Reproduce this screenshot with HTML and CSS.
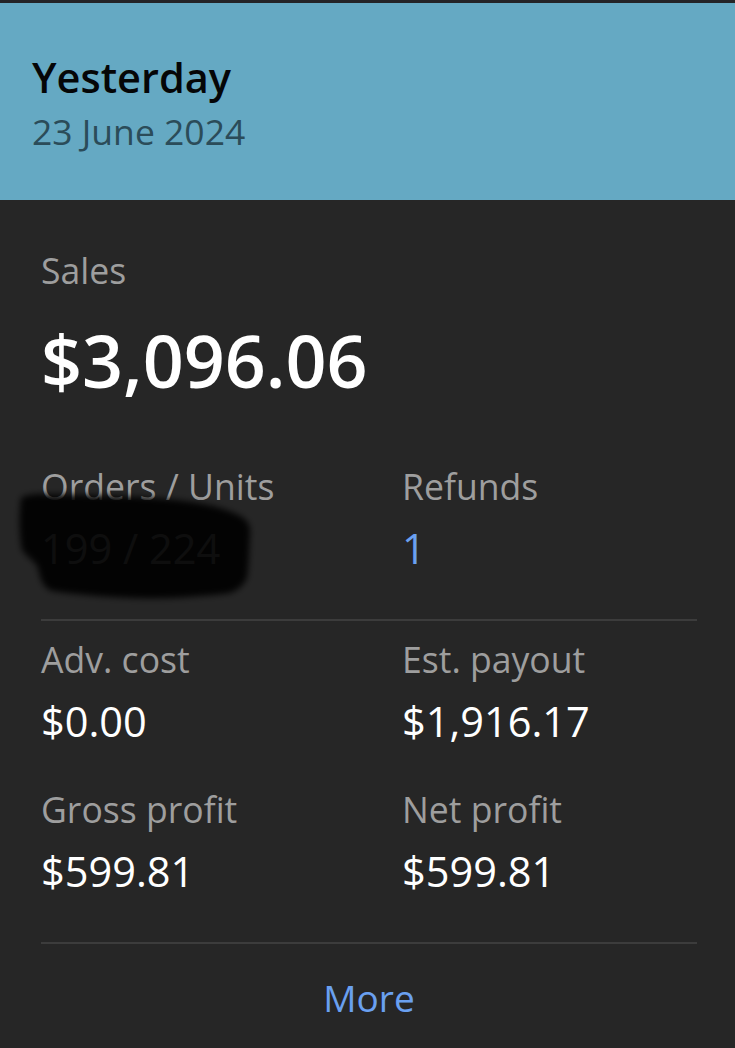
FILE: index.html
```html
<!DOCTYPE html>
<html lang="en">
<head>
<meta charset="utf-8">
<title>Yesterday</title>
<link rel="stylesheet" href="styles.css">
</head>
<body>
<div class="card">
  <header class="head">
    <div class="head-title">Yesterday</div>
    <div class="head-date">23 June 2024</div>
  </header>
  <main class="body">
    <section class="sales">
      <div class="label">Sales</div>
      <div class="big">$3,096.06</div>
      <div class="grid grid-top">
        <div class="stat">
          <div class="label">Orders / Units</div>
          <div class="value hidden-value">199 / 224
            <svg class="smear" viewBox="0 0 260 125" width="260" height="125" aria-hidden="true">
              <defs>
                <filter id="blur" x="-10%" y="-20%" width="120%" height="140%">
                  <feGaussianBlur stdDeviation="3"/>
                </filter>
              </defs>
              <path filter="url(#blur)" fill="#000" fill-opacity="0.92" d="M11 12 C15 9 24 8 32 8 C80 9 125 10 157 13 C190 16 212 21 226 28 C236 32 241 38 240 48 C239 64 239 80 237 92 C233 100 228 104 220 107 C190 111 155 113 123 112 C95 111 62 108 42 105 C33 102 30 92 28 82 C26 76 18 72 12 64 C9 48 9 28 11 12 Z"/>
            </svg>
          </div>
        </div>
        <div class="stat">
          <div class="label">Refunds</div>
          <div class="value link">1</div>
        </div>
      </div>
    </section>
    <hr class="divider">
    <section class="grid grid-bottom">
      <div class="stat">
        <div class="label">Adv. cost</div>
        <div class="value">$0.00</div>
      </div>
      <div class="stat">
        <div class="label">Est. payout</div>
        <div class="value">$1,916.17</div>
      </div>
      <div class="stat">
        <div class="label">Gross profit</div>
        <div class="value">$599.81</div>
      </div>
      <div class="stat">
        <div class="label">Net profit</div>
        <div class="value">$599.81</div>
      </div>
    </section>
    <hr class="divider">
    <div class="more">More</div>
  </main>
</div>
</body>
</html>
```
FILE: styles.css
```css
html, body {
  margin: 0;
  padding: 0;
  background: #262626;
  font-family: "Open Sans", "Noto Sans", sans-serif;
}
.card {
  width: 735px;
  min-height: 1048px;
  background: #262626;
  border-top: 3px solid #242427;
  box-sizing: border-box;
}
.head {
  background: #65a9c3;
  padding: 50px 32px 47px;
}
.head-title {
  font-size: 41.5px;
  line-height: 48px;
  font-weight: 600;
  color: #050607;
}
.head-date {
  margin-top: 8px;
  font-size: 35.5px;
  line-height: 44px;
  color: #2b4c59;
}
.body {
  padding: 48px 38px 0 41px;
}
.label {
  font-size: 35.6px;
  line-height: 44px;
  color: #9e9e9e;
}
.big {
  margin-top: 26px;
  font-size: 71.8px;
  line-height: 84px;
  font-weight: 600;
  color: #ffffff;
}
.grid {
  display: grid;
  grid-template-columns: 361px 1fr;
}
.grid-top {
  margin-top: 62px;
}
.grid-bottom {
  row-gap: 40px;
}
.stat {
  display: flex;
  flex-direction: column;
  gap: 14px;
}
.value {
  font-size: 41.5px;
  line-height: 52px;
  color: #ffffff;
}
.link {
  color: #6aa0f0;
}
.hidden-value {
  position: relative;
  color: #b4b4b4;
}
.smear {
  position: absolute;
  left: -31px;
  top: -36px;
}
.divider {
  border: 0;
  height: 2px;
  background: #3c3c3c;
  margin: 45px 0 16px;
}
.divider + .more {
  margin-top: 30px;
}
.more {
  text-align: center;
  font-size: 37px;
  line-height: 48px;
  color: #6aa0f0;
}
```
